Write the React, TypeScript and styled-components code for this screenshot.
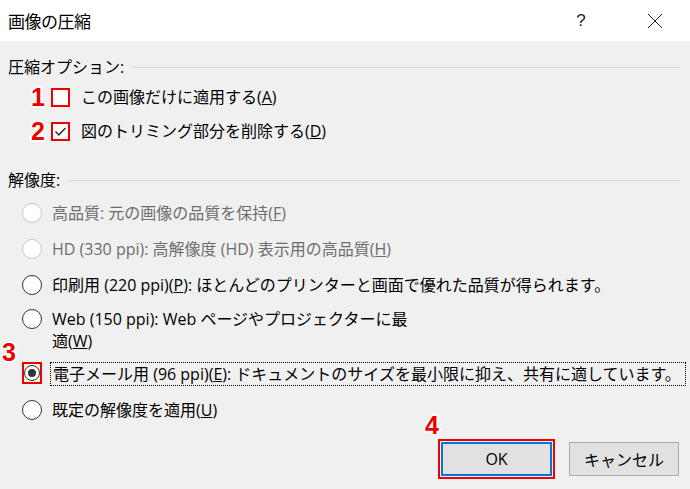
import React from 'react';
import styled, { createGlobalStyle } from 'styled-components';

const GlobalStyle = createGlobalStyle`
  html, body {
    margin: 0;
    padding: 0;
    background: #f0f0f0;
  }
  body {
    font-family: "Open Sans", "Noto Sans CJK JP", sans-serif;
    color: #000;
  }
`;

const Dialog = styled.div`
  width: 690px;
  height: 489px;
  background: #f0f0f0;
  display: flex;
  flex-direction: column;
  overflow: hidden;
`;

const TitleBar = styled.div`
  height: 41px;
  background: #fff;
  display: flex;
  align-items: center;
  padding-left: 8px;
  box-sizing: border-box;
`;

const Title = styled.div`
  font-size: 17px;
  flex: 1;
  letter-spacing: -0.5px;
`;

const HelpButton = styled.div`
  width: 20px;
  font-size: 17px;
  font-family: "Liberation Sans", sans-serif;
  color: #222;
  margin-right: 56px;
  text-align: center;
`;

const CloseButton = styled.div`
  width: 16px;
  height: 16px;
  margin-right: 27px;
  display: flex;
`;

const Content = styled.div`
  display: flex;
  flex-direction: column;
  flex: 1;
  padding-top: 13px;
`;

const GroupHeader = styled.div<{ $mt?: number }>`
  display: flex;
  align-items: center;
  height: 24px;
  padding-left: 8px;
  padding-right: 10px;
  margin-top: ${p => p.$mt ?? 0}px;
  font-size: 16px;
`;

const HeaderLine = styled.div`
  flex: 1;
  height: 1px;
  background: #dadada;
  margin-left: 8px;
  margin-top: 2px;
`;

const CheckRow = styled.div<{ $mt: number }>`
  display: flex;
  align-items: center;
  height: 22px;
  padding-left: 28px;
  margin-top: ${p => p.$mt}px;
  font-size: 16px;
`;

const Marker = styled.span`
  font-family: "Liberation Sans", sans-serif;
  font-weight: 700;
  font-size: 25px;
  line-height: 1;
  color: #ee0000;
  text-shadow: -1px -1px 0 #fff, 1px -1px 0 #fff, -1px 1px 0 #fff, 1px 1px 0 #fff,
    0 2px 0 #fff, 2px 0 0 #fff, -2px 0 0 #fff, 0 -2px 0 #fff;
`;

const RowMarker = styled(Marker)`
  width: 20px;
  text-align: center;
`;

const FloatMarker = styled(Marker)<{ $left: number; $top: number }>`
  position: absolute;
  left: ${p => p.$left}px;
  top: ${p => p.$top}px;
`;

const CheckBox = styled.div`
  width: 19px;
  height: 19px;
  box-sizing: border-box;
  border: 2px solid #ee0000;
  background: #fff;
  margin-left: 3px;
  display: flex;
  align-items: center;
  justify-content: center;
`;

const CheckLabel = styled.span`
  margin-left: 11px;
  line-height: 22px;
`;

const RadioRow = styled.div<{ $mt: number }>`
  position: relative;
  display: flex;
  align-items: flex-start;
  padding-left: 22px;
  margin-top: ${p => p.$mt}px;
  font-size: 16px;
`;

const RadioCircle = styled.div<{ $disabled?: boolean; $checked?: boolean }>`
  width: 20px;
  height: 20px;
  box-sizing: border-box;
  border-radius: 50%;
  background: #fff;
  border: 1.5px solid ${p => (p.$disabled ? '#c8c8c8' : '#333')};
  margin-top: 1px;
  flex-shrink: 0;
  display: flex;
  align-items: center;
  justify-content: center;
  &::after {
    content: '';
    display: ${p => (p.$checked ? 'block' : 'none')};
    width: 10px;
    height: 10px;
    border-radius: 50%;
    background: #333;
  }
`;

const RadioMark = styled.div`
  width: 20px;
  height: 22px;
  box-sizing: border-box;
  border: 2px solid #ee0000;
  display: flex;
  align-items: center;
  justify-content: center;
  flex-shrink: 0;
  & > div {
    margin-top: 0;
    width: 16px;
    height: 16px;
  }
  & > div::after {
    width: 8px;
    height: 8px;
  }
`;

const RadioLabel = styled.span<{ $disabled?: boolean; $focused?: boolean }>`
  margin-left: ${p => (p.$focused ? 8 : 10)}px;
  line-height: 22px;
  white-space: nowrap;
  color: ${p => (p.$disabled ? '#6d6d6d' : '#000')};
  border: ${p => (p.$focused ? '1px dotted #000' : 'none')};
  padding: ${p => (p.$focused ? '0 4px 0 2px' : '0')};
`;

const Footer = styled.div`
  display: flex;
  justify-content: flex-end;
  align-items: center;
  margin-top: 21px;
  padding-right: 11px;
  gap: 17px;
`;

const ButtonWrap = styled.div`
  position: relative;
  display: flex;
`;

const Button = styled.div<{ $default?: boolean }>`
  width: ${p => (p.$default ? 111 : 110)}px;
  height: 34px;
  box-sizing: border-box;
  background: #e1e1e1;
  border: ${p => (p.$default ? '2px solid #0078d7' : '1px solid #adadad')};
  display: flex;
  align-items: center;
  justify-content: center;
  font-size: 16px;
  outline: ${p => (p.$default ? '2px solid #ee0000' : 'none')};
  outline-offset: 1px;
`;

const App: React.FC = () => {
  return (
    <Dialog>
      <GlobalStyle />
      <TitleBar>
        <Title>画像の圧縮</Title>
        <HelpButton>?</HelpButton>
        <CloseButton>
          <svg width="16" height="16" viewBox="0 0 16 16">
            <path d="M1 1 L15 15 M15 1 L1 15" stroke="#222" strokeWidth="1" fill="none" />
          </svg>
        </CloseButton>
      </TitleBar>
      <Content>
        <GroupHeader>
          圧縮オプション:
          <HeaderLine />
        </GroupHeader>
        <CheckRow $mt={8}>
          <RowMarker>1</RowMarker>
          <CheckBox />
          <CheckLabel>この画像だけに適用する(<u>A</u>)</CheckLabel>
        </CheckRow>
        <CheckRow $mt={12}>
          <RowMarker>2</RowMarker>
          <CheckBox>
            <svg width="13" height="11" viewBox="0 0 13 11">
              <path d="M1.5 5.5 L4.8 8.8 L11.5 2" stroke="#333" strokeWidth="1.6" fill="none" />
            </svg>
          </CheckBox>
          <CheckLabel>図のトリミング部分を削除する(<u>D</u>)</CheckLabel>
        </CheckRow>
        <GroupHeader $mt={25}>
          解像度:
          <HeaderLine />
        </GroupHeader>
        <RadioRow $mt={11}>
          <RadioCircle $disabled />
          <RadioLabel $disabled>高品質: 元の画像の品質を保持(<u>F</u>)</RadioLabel>
        </RadioRow>
        <RadioRow $mt={14}>
          <RadioCircle $disabled />
          <RadioLabel $disabled>HD (330 ppi): 高解像度 (HD) 表示用の高品質(<u>H</u>)</RadioLabel>
        </RadioRow>
        <RadioRow $mt={14}>
          <RadioCircle />
          <RadioLabel>印刷用 (220 ppi)(<u>P</u>): ほとんどのプリンターと画面で優れた品質が得られます。</RadioLabel>
        </RadioRow>
        <RadioRow $mt={12}>
          <RadioCircle />
          <RadioLabel>
            Web (150 ppi): Web ページやプロジェクターに最
            <br />
            適(<u>W</u>)
          </RadioLabel>
        </RadioRow>
        <RadioRow $mt={10}>
          <FloatMarker $left={2} $top={-22}>3</FloatMarker>
          <RadioMark>
            <RadioCircle $checked />
          </RadioMark>
          <RadioLabel $focused>電子メール用 (96 ppi)(<u>E</u>): ドキュメントのサイズを最小限に抑え、共有に適しています。</RadioLabel>
        </RadioRow>
        <RadioRow $mt={13}>
          <RadioCircle />
          <RadioLabel>既定の解像度を適用(<u>U</u>)</RadioLabel>
        </RadioRow>
        <Footer>
          <ButtonWrap>
            <FloatMarker $left={-16} $top={-29}>4</FloatMarker>
            <Button $default>OK</Button>
          </ButtonWrap>
          <ButtonWrap>
            <Button>キャンセル</Button>
          </ButtonWrap>
        </Footer>
      </Content>
    </Dialog>
  );
};

export default App;
